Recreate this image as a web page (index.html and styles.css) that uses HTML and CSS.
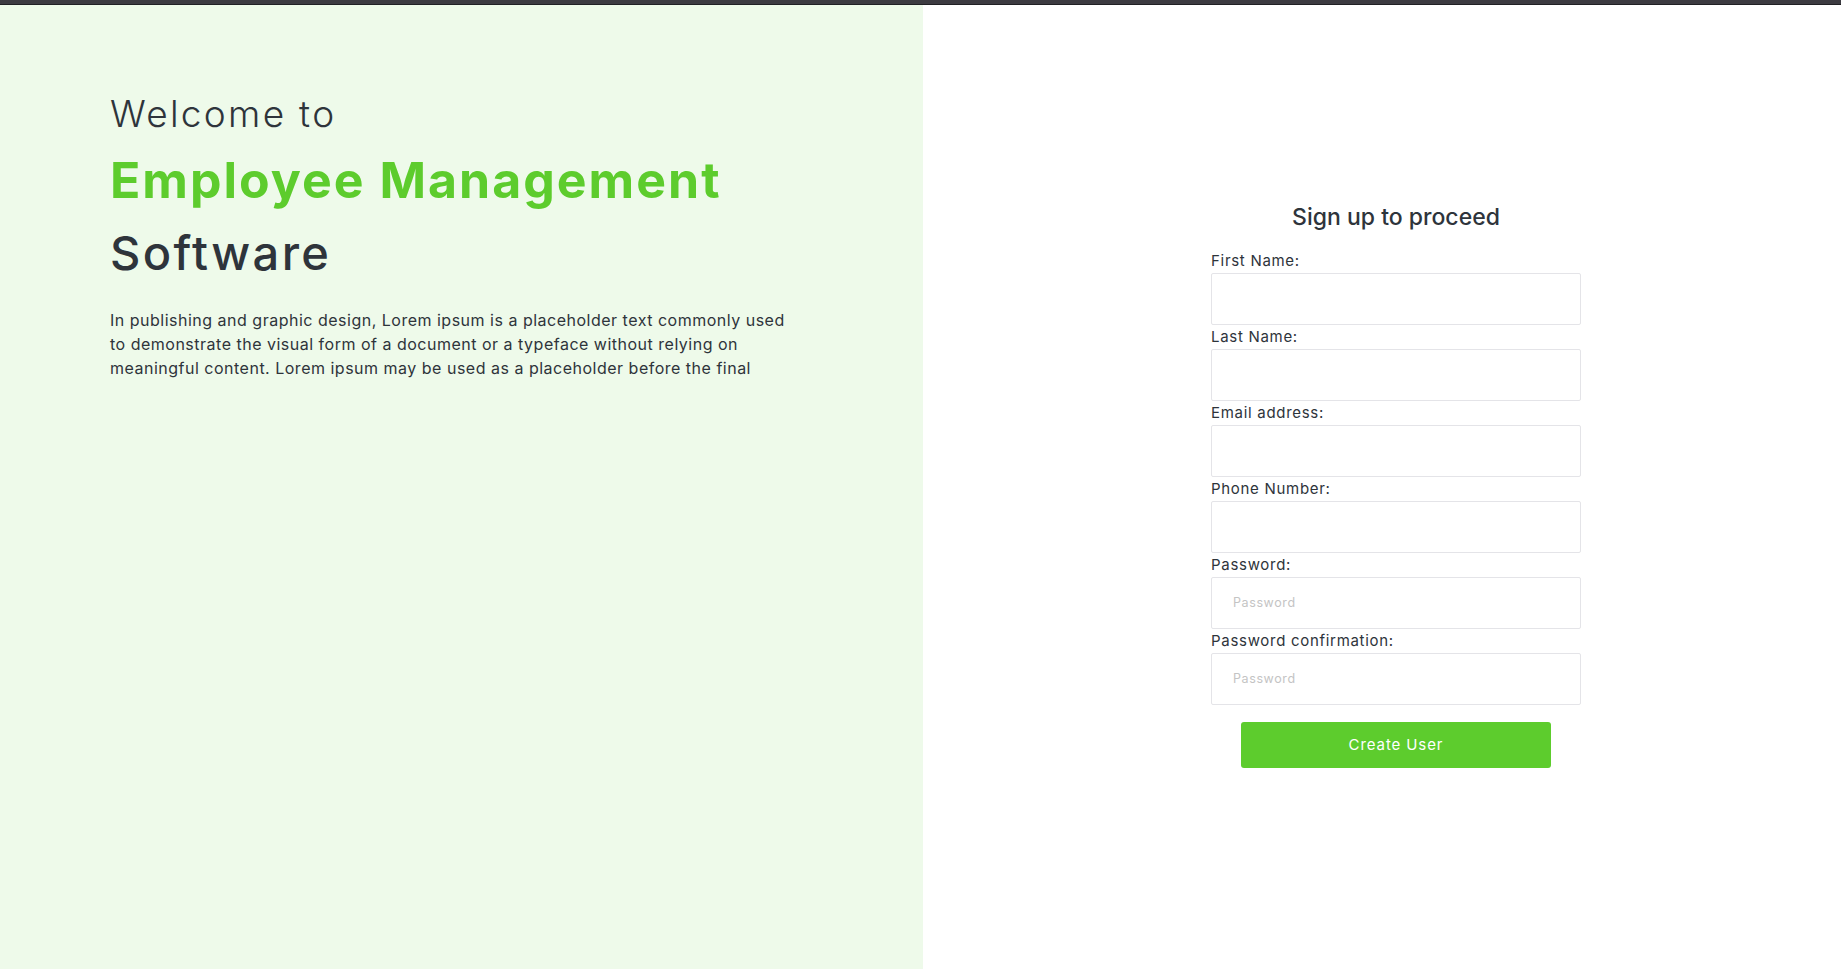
FILE: index.html
```html
<!DOCTYPE html>
<html lang="en">
<head>
<meta charset="utf-8">
<title>Employee Management Software - Sign up</title>
<link rel="stylesheet" href="styles.css">
</head>
<body>
<div class="topbar"></div>
<main class="page">
  <section class="intro">
    <h2 class="welcome">Welcome to</h2>
    <h1 class="brand">Employee Management</h1>
    <h2 class="software">Software</h2>
    <p class="lead">In publishing and graphic design, Lorem ipsum is a placeholder text commonly used to demonstrate the visual form of a document or a typeface without relying on meaningful content. Lorem ipsum may be used as a placeholder before the final</p>
  </section>
  <section class="signup">
    <form class="form">
      <h3 class="form-title">Sign up to proceed</h3>
      <label class="label" for="fn">First Name:</label>
      <input class="input" id="fn" type="text">
      <label class="label" for="ln">Last Name:</label>
      <input class="input" id="ln" type="text">
      <label class="label" for="em">Email address:</label>
      <input class="input" id="em" type="email">
      <label class="label" for="ph">Phone Number:</label>
      <input class="input" id="ph" type="text">
      <label class="label" for="pw">Password:</label>
      <input class="input" id="pw" type="password" placeholder="Password">
      <label class="label" for="pc">Password confirmation:</label>
      <input class="input" id="pc" type="password" placeholder="Password">
      <button class="btn" type="button">Create User</button>
    </form>
  </section>
</main>
</body>
</html>
```

FILE: styles.css
```css
* { box-sizing: border-box; }
html, body { margin: 0; padding: 0; }
body {
  font-family: "Inter", "Open Sans", sans-serif;
  color: #2e343b;
  background: #fff;
  height: 969px;
  overflow: hidden;
}
.topbar {
  height: 5px;
  background: #3c3b41;
  border-bottom: 1px solid #202024;
}
.page {
  display: flex;
  height: 964px;
}
.intro {
  width: 923px;
  flex: none;
  background: #eefaea;
  padding: 85px 110px 0 110px;
}
.welcome {
  margin: 0;
  font-size: 37px;
  font-weight: 300;
  line-height: 48px;
  letter-spacing: 2.3px;
}
.brand {
  margin: 12px 0 0;
  font-size: 50px;
  font-weight: 700;
  line-height: 60px;
  color: #5dcc2d;
  letter-spacing: 2px;
}
.software {
  margin: 13px 0 0;
  font-size: 47px;
  font-weight: 500;
  line-height: 60px;
  letter-spacing: 2.4px;
}
.lead {
  margin: 25px 0 0;
  max-width: 685px;
  font-size: 16px;
  line-height: 24px;
  letter-spacing: 0.5px;
}
.signup {
  flex: 1;
  display: flex;
  align-items: center;
  justify-content: center;
  padding-left: 28px;
  padding-bottom: 6px;
}
.form {
  width: 370px;
  display: flex;
  flex-direction: column;
}
.form-title {
  margin: 0 0 16px;
  text-align: center;
  font-size: 23px;
  font-weight: 500;
  line-height: 32px;
}
.label {
  font-size: 15px;
  line-height: 24px;
  height: 24px;
  letter-spacing: 0.7px;
}
.input {
  height: 52px;
  width: 100%;
  border: 1px solid #e4e4e8;
  border-radius: 2px;
  background: #fff;
  padding: 0 21px;
  font-family: inherit;
  font-size: 12.5px;
  letter-spacing: 0.6px;
  outline: none;
}
.input::placeholder { color: #c4c4c4; }
.btn {
  align-self: center;
  margin-top: 17px;
  width: 310px;
  height: 46px;
  border: none;
  border-radius: 3px;
  background: #5dcc2d;
  color: #fff;
  font-family: inherit;
  font-size: 15px;
  letter-spacing: 0.9px;
  cursor: pointer;
}
```
